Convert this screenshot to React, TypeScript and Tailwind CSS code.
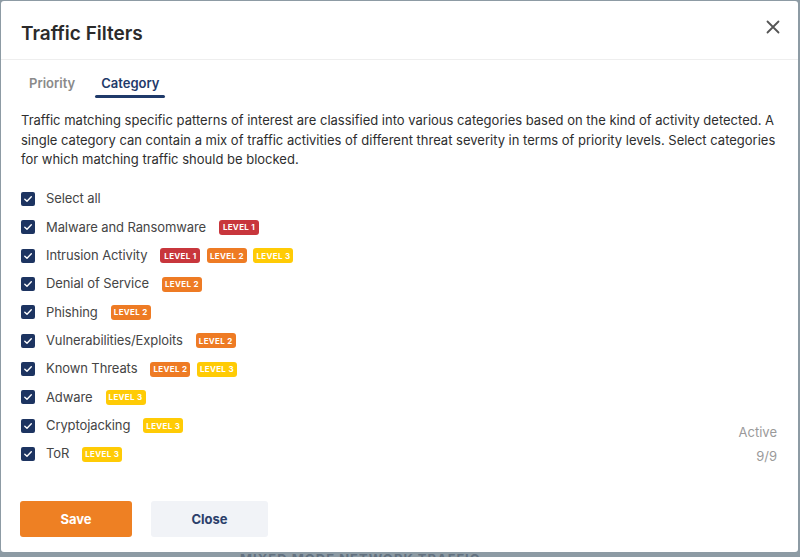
import React from "react";

type Level = 1 | 2 | 3;

const rows: { label: string; levels: Level[] }[] = [
  { label: "Malware and Ransomware", levels: [1] },
  { label: "Intrusion Activity", levels: [1, 2, 3] },
  { label: "Denial of Service", levels: [2] },
  { label: "Phishing", levels: [2] },
  { label: "Vulnerabilities/Exploits", levels: [2] },
  { label: "Known Threats", levels: [2, 3] },
  { label: "Adware", levels: [3] },
  { label: "Cryptojacking", levels: [3] },
  { label: "ToR", levels: [3] },
];

const badgeClass: Record<Level, string> = {
  1: "bg-[#c8363c]",
  2: "bg-[#ee7b24]",
  3: "bg-[#ffcb05]",
};

function Badge({ level }: { level: Level }) {
  return (
    <span
      className={`inline-flex items-center justify-center h-[15px] w-[40px] rounded-[3px] text-white text-[8px] font-bold tracking-[0.3px] leading-none ${badgeClass[level]}`}
    >
      LEVEL {level}
    </span>
  );
}

function Check() {
  return (
    <span className="w-[14px] h-[14px] rounded-[2px] bg-[#1d3461] flex items-center justify-center shrink-0">
      <svg width="10" height="10" viewBox="0 0 10 10" fill="none">
        <path d="M1.8 5.2 L4 7.3 L8.3 2.8" stroke="white" strokeWidth="1.4" strokeLinecap="round" strokeLinejoin="round" />
      </svg>
    </span>
  );
}

function Row({ label, levels }: { label: string; levels: Level[] }) {
  return (
    <div className="h-[28.33px] flex items-center">
      <Check />
      <span className="ml-[11px] text-[13px] text-[#454545] tracking-[-0.1px]">{label}</span>
      {levels.length > 0 && (
        <span className="ml-[13px] flex gap-[6.5px]">
          {levels.map((l) => (
            <Badge key={l} level={l} />
          ))}
        </span>
      )}
    </div>
  );
}

export default function App() {
  return (
    <div
      className="w-[800px] h-[557px] bg-[#8d9ba4] overflow-hidden relative"
      style={{ fontFamily: "Inter, 'Noto Sans', sans-serif" }}
    >
      <div className="absolute left-[240px] top-[551px] text-[13px] leading-[16px] font-bold text-[#3a4a5e] tracking-[1px] opacity-50">
        MIXED MODE NETWORK TRAFFIC
      </div>
      <div className="relative ml-[1px] mt-[1px] w-[797px] h-[551px] bg-white rounded-[3px] flex flex-col">
        <div className="h-[59px] border-b border-[#eeeeee] flex items-center justify-between pl-[20px] pr-[18px]">
          <h1 className="text-[19px] font-semibold text-[#2b2b2b] mt-[8px]">Traffic Filters</h1>
          <svg width="14" height="14" viewBox="0 0 14 14" className="mb-[7px]">
            <path d="M1.5 1.5 L12.5 12.5 M12.5 1.5 L1.5 12.5" stroke="#555" strokeWidth="1.8" strokeLinecap="round" />
          </svg>
        </div>
        <div className="flex pl-[20px] h-[37px] items-end">
          <div className="px-[8px] pb-[4px] text-[13px] font-semibold text-[#8a8a8a]">Priority</div>
          <div className="ml-[12px] px-[6px] pb-[4px] text-[13px] font-semibold text-[#1f3a6a] relative">
            Category
            <span className="absolute left-0 right-0 bottom-[-1px] h-[3px] rounded-full bg-[#1f3a6a]" />
          </div>
        </div>
        <p className="mt-[14px] px-[20px] text-[13px] leading-[19.5px] text-[#2e2e2e]">
          Traffic matching specific patterns of interest are classified into various categories based on the kind of activity detected. A single category can contain a mix of traffic activities of different threat severity in terms of priority levels. Select categories for which matching traffic should be blocked.
        </p>
        <div className="mt-[15.5px] pl-[20px] pr-[21px] flex justify-between items-end">
          <div className="flex flex-col">
            <Row label="Select all" levels={[]} />
            {rows.map((r) => (
              <Row key={r.label} label={r.label} levels={r.levels} />
            ))}
          </div>
          <div className="flex flex-col items-end text-[13px] text-[#9a9a9a]">
            <span className="leading-[24px]">Active</span>
            <span className="leading-[24px]">9/9</span>
          </div>
        </div>
        <div className="mt-[33px] pl-[19px] flex gap-[19px]">
          <button className="w-[112px] h-[36px] rounded-[3px] bg-[#ee8023] text-white text-[13px] font-bold">
            Save
          </button>
          <button className="w-[117px] h-[36px] rounded-[3px] bg-[#f1f3f7] text-[#2b3f6b] text-[13px] font-bold">
            Close
          </button>
        </div>
      </div>
    </div>
  );
}
